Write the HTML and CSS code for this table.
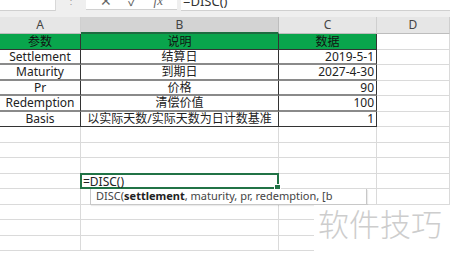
FILE: index.html
```html
<!DOCTYPE html>
<html>
<head>
<meta charset="utf-8">
<link rel="stylesheet" href="styles.css">
</head>
<body>
<div class="app">
  <div class="toolbar">
    <div class="namebox"></div>
    <div class="grip">⋮</div>
    <div class="fxbox">
      <span class="ico">✕</span>
      <span class="ico">✓</span>
      <span class="ico fx">fx</span>
    </div>
    <div class="formula"><span class="ftext">=DISC()</span></div>
  </div>
  <div class="sheet">
    <div class="hd">A</div><div class="hd sel">B</div><div class="hd">C</div><div class="hd">D</div>

    <div class="c t g">参数</div><div class="c t g">说明</div><div class="c t g">数据</div><div class="c e"></div>
    <div class="c t">Settlement</div><div class="c t">结算日</div><div class="c t r">2019-5-1</div><div class="c e"></div>
    <div class="c t">Maturity</div><div class="c t">到期日</div><div class="c t r">2027-4-30</div><div class="c e"></div>
    <div class="c t">Pr</div><div class="c t">价格</div><div class="c t r">90</div><div class="c e"></div>
    <div class="c t">Redemption</div><div class="c t">清偿价值</div><div class="c t r">100</div><div class="c e"></div>
    <div class="c t last">Basis</div><div class="c t last">以实际天数/实际天数为日计数基准</div><div class="c t r last">1</div><div class="c e"></div>

    <div class="c e"></div><div class="c e"></div><div class="c e"></div><div class="c e"></div>
    <div class="c e"></div><div class="c e"></div><div class="c e"></div><div class="c e"></div>
    <div class="c e"></div><div class="c e"></div><div class="c e"></div><div class="c e"></div>
    <div class="c e"></div><div class="c e active">=DISC()</div><div class="c e"></div><div class="c e"></div>
    <div class="c e"></div><div class="c e"></div><div class="c e"></div><div class="c e"></div>
    <div class="c e"></div><div class="c e"></div><div class="c e"></div><div class="c e"></div>
    <div class="c e"></div><div class="c e"></div><div class="c e"></div><div class="c e"></div>
    <div class="c e"></div><div class="c e"></div><div class="c e"></div><div class="c e"></div>
  </div>
  <div class="tooltip">DISC(<b>settlement</b>, maturity, pr, redemption, [b</div>
  <div class="watermark">软件技巧</div>
</div>
</body>
</html>
```
FILE: styles.css
```css
html, body {
  margin: 0;
  padding: 0;
  background: #fff;
}
body {
  font-family: "Noto Sans", "Noto Sans CJK SC", sans-serif;
  font-size: 12px;
  color: #222;
}
.app {
  position: relative;
  width: 450px;
  height: 259px;
  overflow: hidden;
}
.toolbar {
  height: 17px;
  background: #efefef;
  display: flex;
  align-items: flex-start;
  overflow: hidden;
}
.namebox {
  width: 55px;
  height: 10px;
  background: #fff;
  border-right: 1px solid #d8d8d8;
  border-bottom: 1px solid #d0d0d0;
}
.grip {
  width: 30px;
  text-align: center;
  color: #a0a0a0;
  font-size: 10px;
  line-height: 10px;
  margin-top: -5px;
}
.fxbox {
  width: 91px;
  height: 10px;
  background: #fff;
  border-bottom: 1px solid #d0d0d0;
  display: flex;
  justify-content: space-around;
  align-items: flex-end;
  padding: 0 6px;
  box-sizing: border-box;
  overflow: hidden;
}
.ico {
  color: #666;
  font-size: 14px;
  line-height: 14px;
  margin-bottom: 1px;
}
.fx {
  font-family: "Liberation Serif", serif;
  font-style: italic;
  font-size: 13px;
}
.formula {
  margin-left: 4px;
  flex: 1;
  height: 10px;
  background: #fff;
  border-bottom: 1px solid #d0d0d0;
  padding-left: 2px;
  color: #333;
  overflow: hidden;
}
.ftext {
  display: block;
  font-size: 13px;
  line-height: 14px;
  margin-top: -6px;
}
.sheet {
  display: grid;
  grid-template-columns: 81px 198px 98px 73px;
  grid-template-rows: 17px repeat(15, 15.5px);
}
.hd {
  background: #e6e6e6;
  border-right: 1px solid #cfcfcf;
  border-bottom: 1px solid #bdbdbd;
  text-align: center;
  color: #444;
  font-size: 12px;
  line-height: 16px;
  box-sizing: border-box;
}
.hd.sel {
  background: #d3d3d3;
  border-bottom: 2px solid #1e6b40;
  border-right-color: #bdbdbd;
}
.c {
  box-sizing: border-box;
  line-height: 14px;
  white-space: nowrap;
  overflow: hidden;
}
.t {
  text-align: center;
  border-right: 1px solid #333;
  border-bottom: 2px solid #8a8a8a;
  color: #222;
}
.t.g {
  background: #09a54c;
  border-bottom: 1px solid #333;
  color: #111;
  line-height: 15px;
}
.t.last {
  border-bottom: 1px solid #333;
}
.r {
  text-align: right;
  padding-right: 2px;
}
.e {
  border-right: 1px solid #dadada;
  border-bottom: 1px solid #dadada;
}
.active {
  position: relative;
  border: 2px solid #217346;
  margin-left: -1px;
  margin-top: -1px;
  font-size: 12px;
  line-height: 13px;
  padding-left: 1px;
  color: #222;
  overflow: visible;
}
.active::after {
  content: "";
  position: absolute;
  right: -4px;
  bottom: -4px;
  width: 5px;
  height: 5px;
  background: #217346;
  border: 1px solid #fff;
}
.tooltip {
  position: absolute;
  left: 90px;
  top: 189px;
  width: 277px;
  height: 16px;
  box-sizing: border-box;
  background: #fff;
  border: 1px solid #c8c8c8;
  border-top: 0;
  font-size: 11px;
  line-height: 14px;
  padding-left: 5px;
  color: #444;
  white-space: nowrap;
  overflow: hidden;
  box-shadow: 1px 1px 1px rgba(0,0,0,0.08);
}
.tooltip b {
  color: #222;
}
.watermark {
  position: absolute;
  left: 314px;
  top: 205px;
  width: 136px;
  height: 54px;
  background: #fff;
  color: #cdcdcd;
  font-family: "Noto Sans CJK SC", sans-serif;
  font-weight: 300;
  font-size: 31px;
  line-height: 36px;
  padding-left: 4px;
  box-sizing: border-box;
}
```
